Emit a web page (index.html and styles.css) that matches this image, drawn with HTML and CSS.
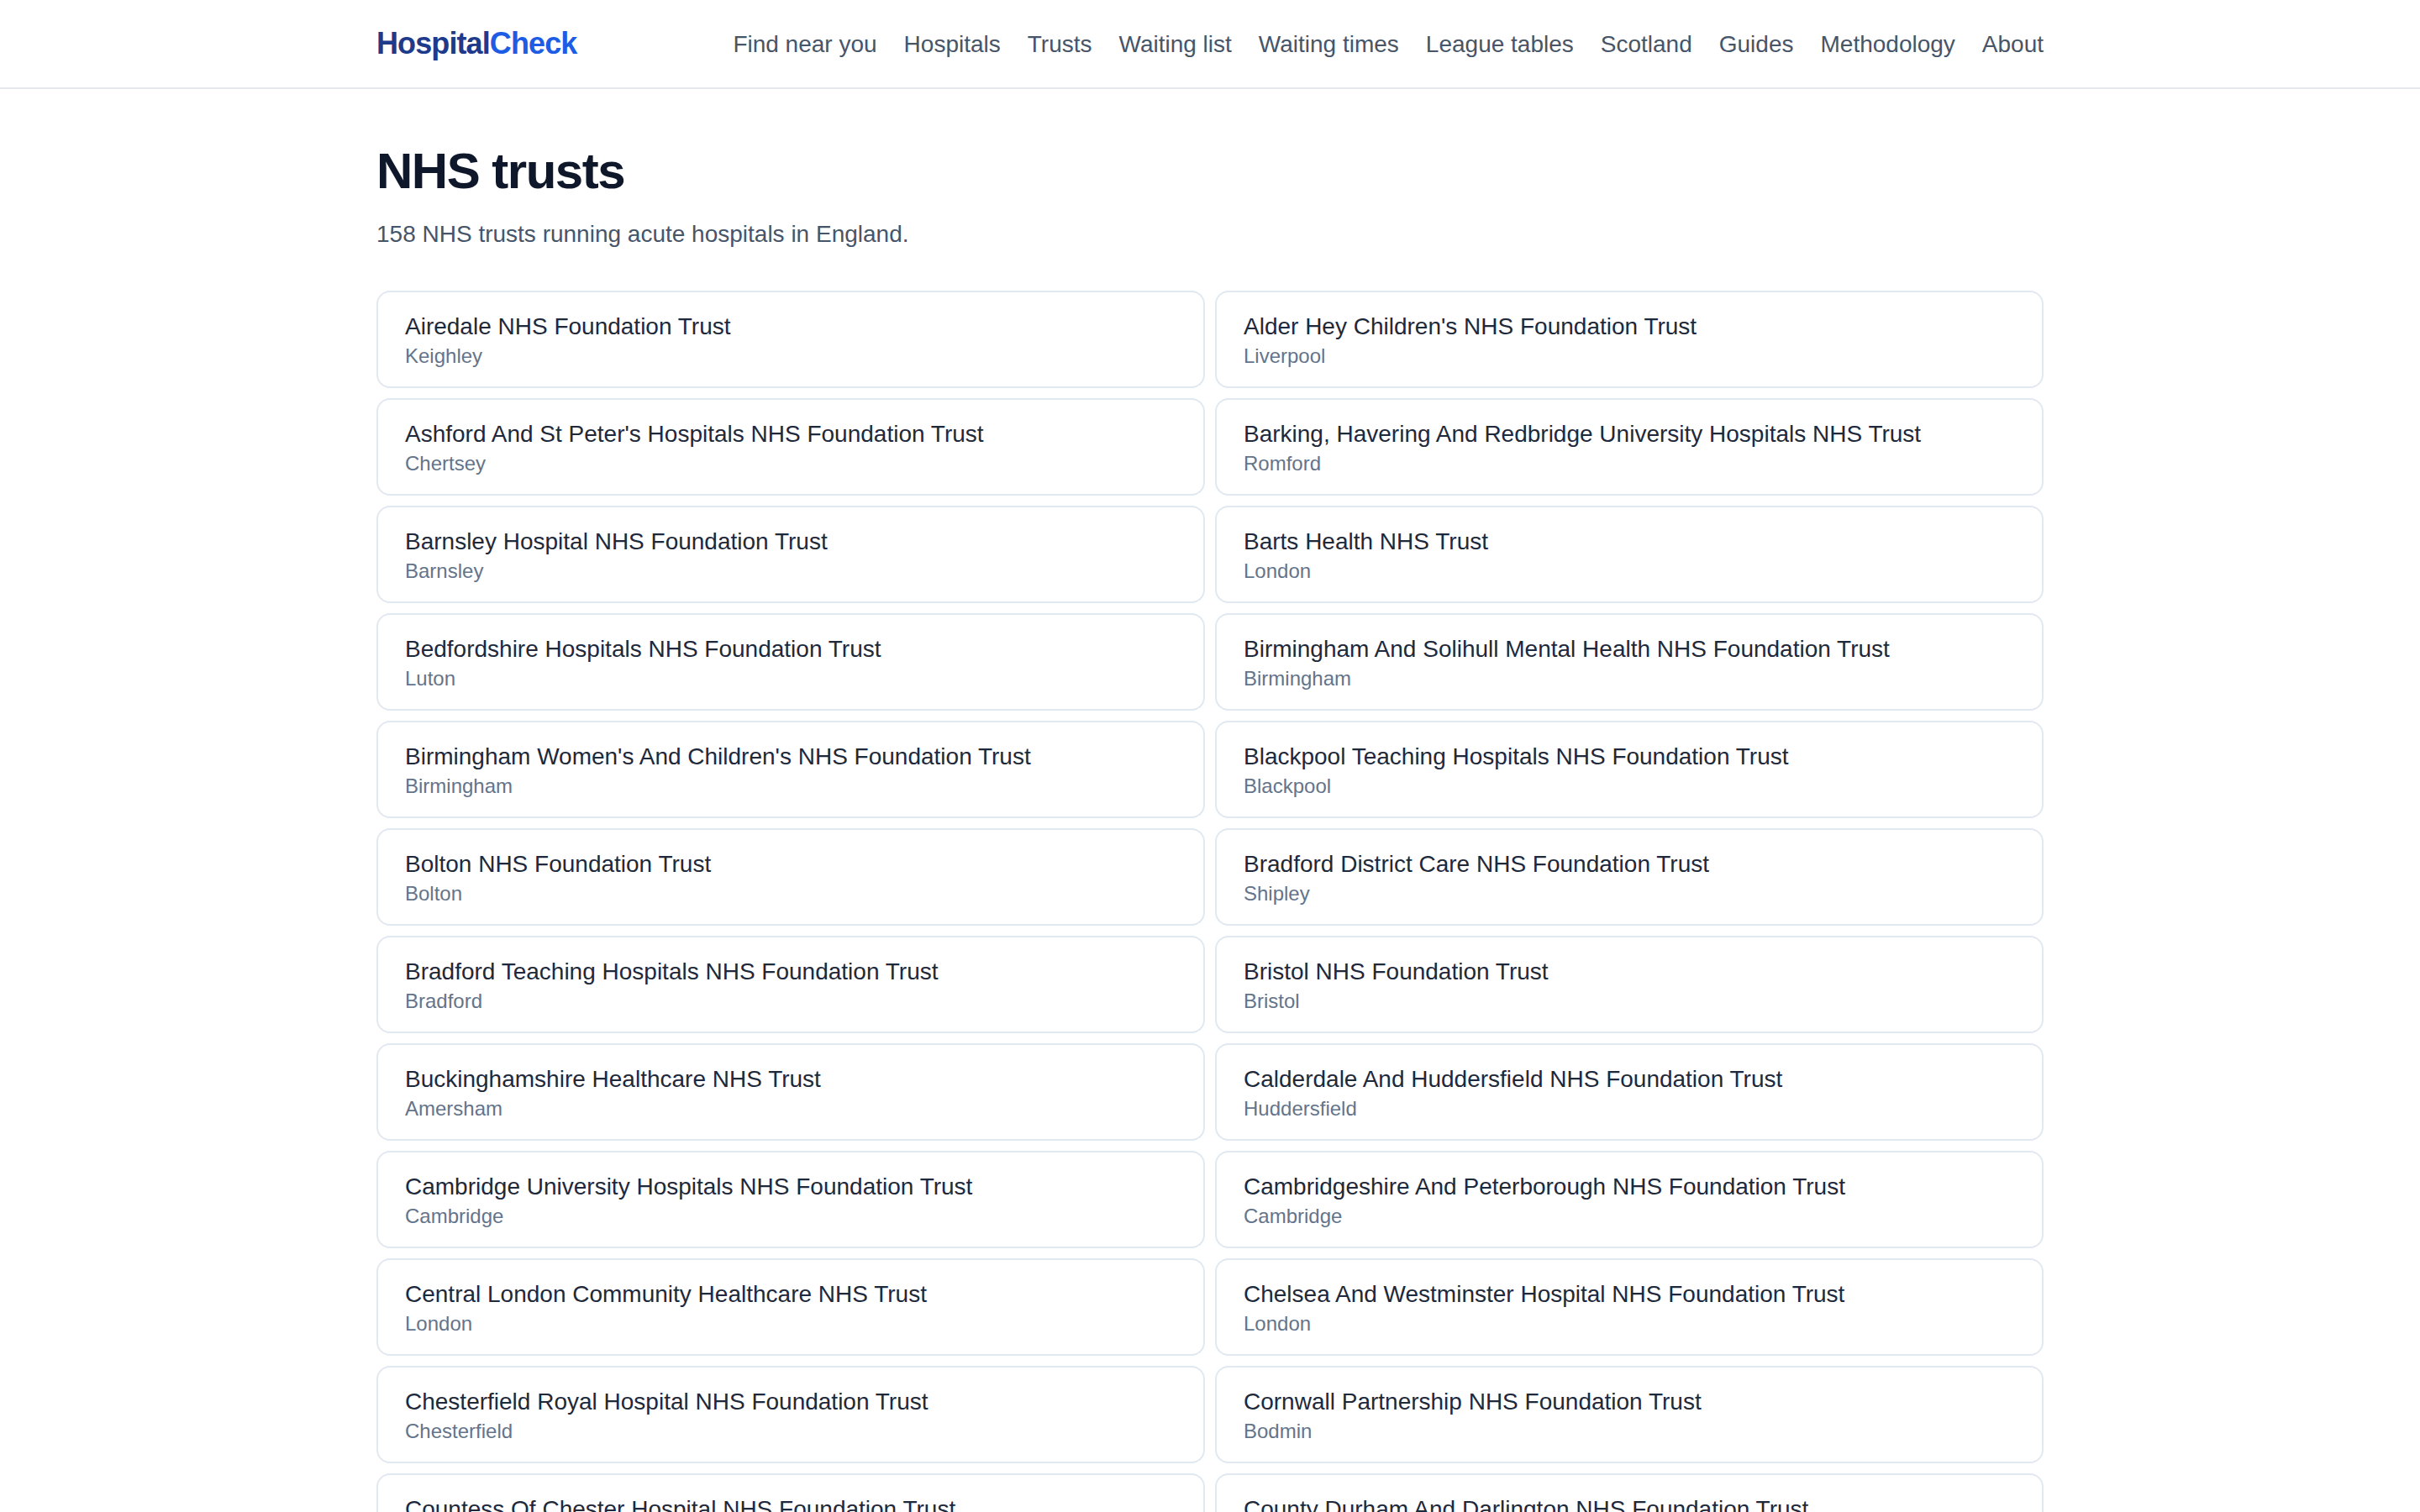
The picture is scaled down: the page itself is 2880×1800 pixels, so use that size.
FILE: index.html
```html
<!DOCTYPE html>
<html lang="en">
<head>
    <meta charset="UTF-8">
    <meta name="viewport" content="width=device-width, initial-scale=1.0">
    <title>NHS trusts | HospitalCheck</title>
    <link rel="stylesheet" href="styles.css">
</head>

<body>
    <header class="header">
        <div class="container header-inner">
            <a href="#" class="logo">Hospital<span>Check</span></a>
            <nav class="nav">
                <a href="#">Find near you</a>
                <a href="#">Hospitals</a>
                <a href="#">Trusts</a>
                <a href="#">Waiting list</a>
                <a href="#">Waiting times</a>
                <a href="#">League tables</a>
                <a href="#">Scotland</a>
                <a href="#">Guides</a>
                <a href="#">Methodology</a>
                <a href="#">About</a>
            </nav>
        </div>
    </header>

    <main class="container main">
        <h1>NHS trusts</h1>
        <p class="intro">158 NHS trusts running acute hospitals in England.</p>

        <div class="trusts">
            <a href="#" class="trust">
                <div class="name">Airedale NHS Foundation Trust</div>
                <div class="town">Keighley</div>
            </a>
            <a href="#" class="trust">
                <div class="name">Alder Hey Children's NHS Foundation Trust</div>
                <div class="town">Liverpool</div>
            </a>
            <a href="#" class="trust">
                <div class="name">Ashford And St Peter's Hospitals NHS Foundation Trust</div>
                <div class="town">Chertsey</div>
            </a>
            <a href="#" class="trust">
                <div class="name">Barking, Havering And Redbridge University Hospitals NHS Trust</div>
                <div class="town">Romford</div>
            </a>
            <a href="#" class="trust">
                <div class="name">Barnsley Hospital NHS Foundation Trust</div>
                <div class="town">Barnsley</div>
            </a>
            <a href="#" class="trust">
                <div class="name">Barts Health NHS Trust</div>
                <div class="town">London</div>
            </a>
            <a href="#" class="trust">
                <div class="name">Bedfordshire Hospitals NHS Foundation Trust</div>
                <div class="town">Luton</div>
            </a>
            <a href="#" class="trust">
                <div class="name">Birmingham And Solihull Mental Health NHS Foundation Trust</div>
                <div class="town">Birmingham</div>
            </a>
            <a href="#" class="trust">
                <div class="name">Birmingham Women's And Children's NHS Foundation Trust</div>
                <div class="town">Birmingham</div>
            </a>
            <a href="#" class="trust">
                <div class="name">Blackpool Teaching Hospitals NHS Foundation Trust</div>
                <div class="town">Blackpool</div>
            </a>
            <a href="#" class="trust">
                <div class="name">Bolton NHS Foundation Trust</div>
                <div class="town">Bolton</div>
            </a>
            <a href="#" class="trust">
                <div class="name">Bradford District Care NHS Foundation Trust</div>
                <div class="town">Shipley</div>
            </a>
            <a href="#" class="trust">
                <div class="name">Bradford Teaching Hospitals NHS Foundation Trust</div>
                <div class="town">Bradford</div>
            </a>
            <a href="#" class="trust">
                <div class="name">Bristol NHS Foundation Trust</div>
                <div class="town">Bristol</div>
            </a>
            <a href="#" class="trust">
                <div class="name">Buckinghamshire Healthcare NHS Trust</div>
                <div class="town">Amersham</div>
            </a>
            <a href="#" class="trust">
                <div class="name">Calderdale And Huddersfield NHS Foundation Trust</div>
                <div class="town">Huddersfield</div>
            </a>
            <a href="#" class="trust">
                <div class="name">Cambridge University Hospitals NHS Foundation Trust</div>
                <div class="town">Cambridge</div>
            </a>
            <a href="#" class="trust">
                <div class="name">Cambridgeshire And Peterborough NHS Foundation Trust</div>
                <div class="town">Cambridge</div>
            </a>
            <a href="#" class="trust">
                <div class="name">Central London Community Healthcare NHS Trust</div>
                <div class="town">London</div>
            </a>
            <a href="#" class="trust">
                <div class="name">Chelsea And Westminster Hospital NHS Foundation Trust</div>
                <div class="town">London</div>
            </a>
            <a href="#" class="trust">
                <div class="name">Chesterfield Royal Hospital NHS Foundation Trust</div>
                <div class="town">Chesterfield</div>
            </a>
            <a href="#" class="trust">
                <div class="name">Cornwall Partnership NHS Foundation Trust</div>
                <div class="town">Bodmin</div>
            </a>
            <a href="#" class="trust">
                <div class="name">Countess Of Chester Hospital NHS Foundation Trust</div>
                <div class="town">Chester</div>
            </a>
            <a href="#" class="trust">
                <div class="name">County Durham And Darlington NHS Foundation Trust</div>
                <div class="town">Darlington</div>
            </a>
        </div>
    </main>
</body>
</html>
```
FILE: styles.css
```css
* {
    padding: 0;
    margin: 0;
    box-sizing: border-box;
}

html {
    height: 100%;
    overflow: hidden;
}

body {
    height: 100%;
    overflow: hidden;
    background-color: #ffffff;
    color: #1e293b;
    font-family: "Liberation Sans", Arial, sans-serif;
    font-size: 28px;
    line-height: 40px;
}

a {
    color: inherit;
    text-decoration: none;
}

.container {
    width: 100%;
    max-width: 2048px;
    margin: 0 auto;
    padding: 0 32px;
}

.header {
    border-bottom: 2px solid #e5e7eb;
}

.header-inner {
    height: 104px;
    display: flex;
    align-items: center;
    justify-content: space-between;
}

.logo {
    font-size: 36px;
    font-weight: 700;
    letter-spacing: -0.025em;
    color: #1e3a8a;
}

.logo span {
    color: #1d5ce4;
}

.nav {
    display: flex;
    gap: 32px;
    padding-top: 2px;
    color: #475569;
}

.main {
    padding-top: 65px;
}

h1 {
    font-size: 60px;
    line-height: 66px;
    letter-spacing: -0.025em;
    color: #0f172a;
}

.intro {
    margin-top: 22px;
    color: #475569;
}

.trusts {
    margin-top: 47px;
    display: grid;
    grid-template-columns: 1fr 1fr;
    gap: 12px;
}

.trust {
    padding: 21px 32px;
    border: 2px solid #e2e8f0;
    border-radius: 16px;
}

.town {
    font-size: 24px;
    line-height: 30px;
    color: #64748b;
}
```
